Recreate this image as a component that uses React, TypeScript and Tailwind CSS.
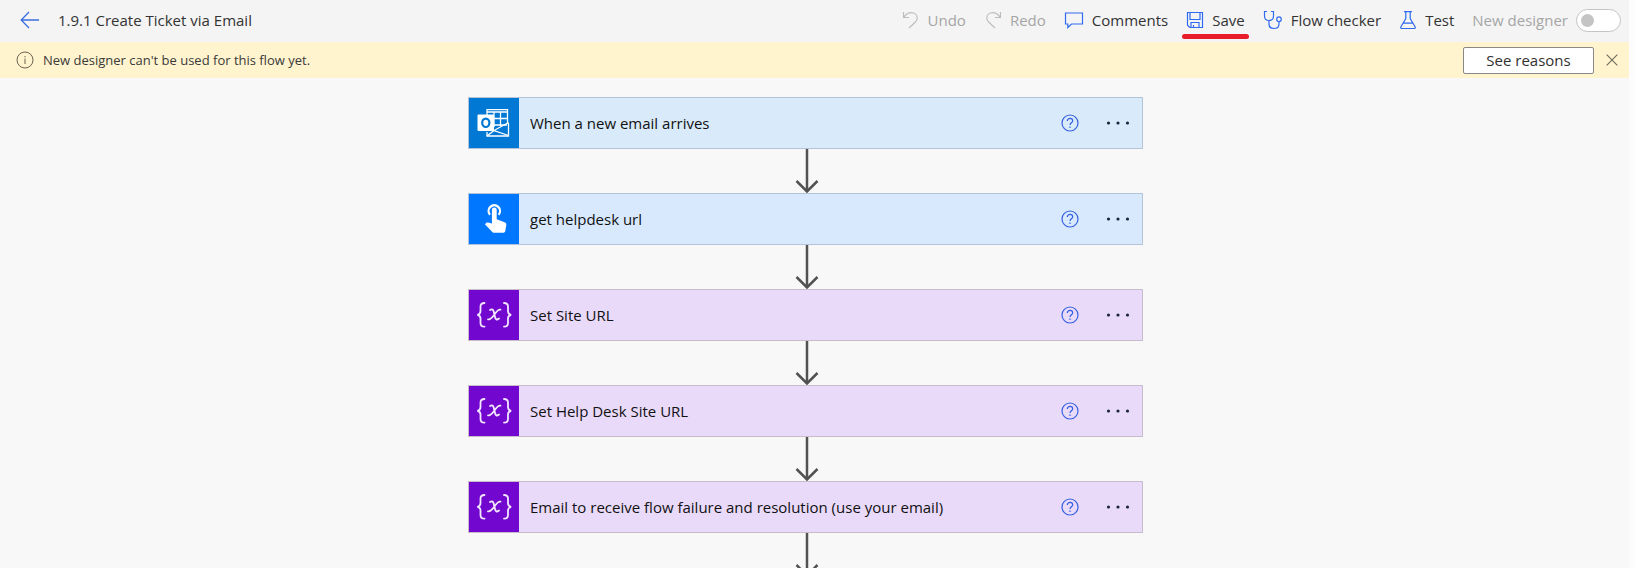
import type { ReactNode } from 'react'

interface Step {
  id: string
  title: string
  kind: 'outlook' | 'manual' | 'variable'
}

const steps: Step[] = [
  { id: 'trigger', title: 'When a new email arrives', kind: 'outlook' },
  { id: 'url', title: 'get helpdesk url', kind: 'manual' },
  { id: 'site', title: 'Set Site URL', kind: 'variable' },
  { id: 'desk', title: 'Set Help Desk Site URL', kind: 'variable' },
  { id: 'email', title: 'Email to receive flow failure and resolution (use your email)', kind: 'variable' },
]

const cardColors = {
  outlook: 'bg-[#d9eafa] border-[#b4c4d8]',
  manual: 'bg-[#d8e9fe] border-[#b4c4d8]',
  variable: 'bg-[#e9dafa] border-[#c6bccb]',
}

const tileColors = {
  outlook: 'bg-[#0078d4]',
  manual: 'bg-[#0077ff]',
  variable: 'bg-[#7208cf]',
}

function BackIcon() {
  return (
    <svg width="20" height="18" viewBox="0 0 20 18" fill="none" stroke="#3b6fe0" strokeWidth="1.3" aria-hidden="true">
      <path d="M19 9H1.5M9 1L1.2 9L9 17" />
    </svg>
  )
}

function UndoIcon() {
  return (
    <svg width="18" height="18" viewBox="0 0 18 18" fill="none" stroke="#bdbdbd" strokeWidth="1.2" aria-hidden="true">
      <path d="M1.500 1v5.500H7M1.800 6.300C3.800 3.400 6.300 1.700 9.300 1.700c3.400 0 5.900 2.300 5.900 5.300 0 1.700-.6 2.900-1.800 4L7 17" />
    </svg>
  )
}

function RedoIcon() {
  return (
    <svg width="18" height="18" viewBox="0 0 18 18" fill="none" stroke="#bdbdbd" strokeWidth="1.2" aria-hidden="true">
      <path d="M16.500 1v5.500H11M16.200 6.300C14.200 3.400 11.700 1.700 8.700 1.700c-3.400 0-5.900 2.300-5.900 5.300 0 1.700.6 2.900 1.800 4L11 17" />
    </svg>
  )
}

function CommentIcon() {
  return (
    <svg width="20" height="18" viewBox="0 0 20 18" fill="none" stroke="#2f6bf0" strokeWidth="1.2" aria-hidden="true">
      <path d="M1.500 2h17v11H7.500L3.800 16.500V13H1.500z" />
    </svg>
  )
}

function SaveIcon() {
  return (
    <svg width="18" height="18" viewBox="0 0 18 18" fill="none" stroke="#2f6bf0" strokeWidth="1.2" aria-hidden="true">
      <path d="M1.500 1.500h15v15H3.800l-2.300-2.300zM4 1.500v7h10v-7M5 16.500v-5h8v5M7.500 16.500v-2.500" />
    </svg>
  )
}

function CheckerIcon() {
  return (
    <svg width="20" height="20" viewBox="0 0 20 20" fill="none" stroke="#2f6bf0" strokeWidth="1.2" aria-hidden="true">
      <path d="M4 1.500H1.500V6c0 2.800 1.800 4.500 4.500 4.500s4.500-1.700 4.500-4.500V1.500H8M6 10.500v3.700c0 2.700 1.800 4.300 4.900 4.300s5.100-1.600 5.100-4.300V11.500" />
      <circle cx="16" cy="9.200" r="2.300" />
    </svg>
  )
}

function TestIcon() {
  return (
    <svg width="18" height="20" viewBox="0 0 18 20" fill="none" stroke="#2f6bf0" strokeWidth="1.2" aria-hidden="true">
      <path d="M5 1.700h8M6.800 1.700v6.800L1.800 17c-.4.8 0 1.500.8 1.500h12.800c.8 0 1.200-.7.8-1.500l-5-8.500V1.700M4.200 13.200h9.600" />
    </svg>
  )
}

function InfoIcon() {
  return (
    <svg width="18" height="18" viewBox="0 0 18 18" fill="none" stroke="#6b6550" aria-hidden="true">
      <circle cx="9" cy="9" r="8" />
      <path d="M9 7.500v5.500M9 5v1.300" />
    </svg>
  )
}

function CloseIcon() {
  return (
    <svg width="12" height="12" viewBox="0 0 12 12" fill="none" stroke="#6e6a5c" strokeWidth="1.1" aria-hidden="true">
      <path d="M.7.7l10.600 10.600M11.300.7L.7 11.300" />
    </svg>
  )
}

function HelpIcon() {
  return (
    <svg width="18" height="18" viewBox="0 0 18 18" fill="none" stroke="#3460e0" strokeWidth="1.2" aria-hidden="true">
      <circle cx="9" cy="9" r="8" />
      <path d="M6.300 7c0-1.600 1.100-2.700 2.700-2.700s2.700 1 2.700 2.500C11.700 8.600 9 8.900 9 11M9 12.600v1.300" />
    </svg>
  )
}

function MoreIcon() {
  return (
    <svg width="24" height="4" viewBox="0 0 24 4" fill="#1b2440" aria-hidden="true">
      <circle cx="2.500" cy="2" r="1.600" />
      <circle cx="12" cy="2" r="1.600" />
      <circle cx="21.500" cy="2" r="1.600" />
    </svg>
  )
}

function OutlookIcon() {
  return (
    <svg width="50" height="50" viewBox="0 0 50 50" fill="none" aria-hidden="true">
      <path d="M18 17V11.700h20.500V26M18 34v4h21.500V25M18 14h20.500M25 14v15M31.500 14v14M18 20.500h20.500M22 27h16" stroke="#fff" strokeWidth="1.300" />
      <path d="M39.500 24.500L25 32.500l14.500 5M25 32.500l-7 5.500" stroke="#fff" strokeWidth="1.300" />
      <rect x="8.500" y="16.500" width="16.500" height="16.500" rx="1" fill="#fff" />
      <ellipse cx="16.800" cy="24.800" rx="3.600" ry="4.200" stroke="#0078d4" strokeWidth="2.200" />
    </svg>
  )
}

function TouchIcon() {
  return (
    <svg width="50" height="50" viewBox="0 0 50 50" fill="none" aria-hidden="true">
      <path d="M21 20.700a5.700 5.700 0 1 1 8.600 0" stroke="#fff" strokeWidth="2.300" />
      <path d="M22.900 15.800a2.400 2.400 0 0 1 4.800 0v9.500l7.900 2.900c1.400.5 1.900 1.500 1.700 2.900l-1 6c-.2 1.100-.9 1.700-2 1.700H25.300c-.8 0-1.400-.3-2-.9l-7.400-7.600 1.300-1.300c.5-.5 1.200-.6 1.900-.4l3.800.9z" fill="#fff" />
    </svg>
  )
}

function VariableIcon() {
  return (
    <svg width="50" height="50" viewBox="0 0 50 50" fill="none" stroke="#f3e6ff" strokeWidth="1.800" strokeLinecap="round" aria-hidden="true">
      <path d="M15.500 13c-3 0-4 1.200-4 3.700v4.300c0 2.400-.9 3.500-3.200 3.800 2.300.3 3.200 1.400 3.200 3.800v4.300c0 2.500 1 3.700 4 3.700" />
      <path d="M35 13c3 0 4 1.200 4 3.700v4.300c0 2.400.9 3.500 3.200 3.800-2.300.3-3.200 1.400-3.200 3.800v4.300c0 2.500-1 3.700-4 3.700" />
      <path d="M21 20c2.200-1.400 3.200-.6 3.800 2l1.200 5c.6 2.600 1.800 3.300 4 1.500M31.500 19.700c-2-.6-3.300.8-5.700 4.300s-4.300 6-6.800 5.300" />
    </svg>
  )
}

function Connector() {
  return (
    <svg width="28" height="44" viewBox="0 0 28 44" fill="none" stroke="#525252" strokeWidth="2.500" aria-hidden="true">
      <path d="M15 0v43M4.500 32L15 42.500L25.500 32" />
    </svg>
  )
}

function ToolbarButton({ icon, label, disabled = false }: { icon: ReactNode; label: string; disabled?: boolean }) {
  return (
    <button type="button" disabled={disabled} className="flex items-center gap-2 text-[#333] disabled:text-[#a6a6a6]">
      {icon}
      {label}
    </button>
  )
}

function StepCard({ step }: { step: Step }) {
  return (
    <div className={`flex h-13 w-full items-center border ${cardColors[step.kind]}`}>
      <div className={`h-full w-[50px] shrink-0 ${tileColors[step.kind]}`}>
        {step.kind === 'outlook' && <OutlookIcon />}
        {step.kind === 'manual' && <TouchIcon />}
        {step.kind === 'variable' && <VariableIcon />}
      </div>
      <h2 className="grow truncate pl-[11px] text-[15px] text-[#111]">{step.title}</h2>
      <button type="button" aria-label="Help" className="mr-[27px]">
        <HelpIcon />
      </button>
      <button type="button" aria-label="More options" className="mr-3 py-2">
        <MoreIcon />
      </button>
    </div>
  )
}

export default function App() {
  return (
    <div className="h-screen overflow-hidden border-r-[5px] border-[#fcfcfc] bg-[#f8f8f8] font-['Open_Sans',sans-serif]">
      <header className="flex h-[42px] items-center bg-[#f4f4f4] pr-2 pb-[2px] pl-5 text-[15px] whitespace-nowrap">
        <button type="button" aria-label="Back">
          <BackIcon />
        </button>
        <h1 className="ml-[18px] text-[15px] text-[#333]">1.9.1 Create Ticket via Email</h1>
        <div className="ml-auto flex items-center gap-[18px]">
          <ToolbarButton icon={<UndoIcon />} label="Undo" disabled />
          <ToolbarButton icon={<RedoIcon />} label="Redo" disabled />
          <ToolbarButton icon={<CommentIcon />} label="Comments" />
          <div className="relative">
            <ToolbarButton icon={<SaveIcon />} label="Save" />
            <span className="absolute -inset-x-1 -bottom-2 h-[5px] rounded-full bg-[#e81c2a]" />
          </div>
          <ToolbarButton icon={<CheckerIcon />} label="Flow checker" />
          <ToolbarButton icon={<TestIcon />} label="Test" />
          <label className="flex items-center gap-2 text-[#a6a6a6]">
            New designer
            <input
              type="checkbox"
              role="switch"
              disabled
              className="h-[23px] w-[45px] appearance-none rounded-full border border-[#c4c4c4] bg-white before:mt-1 before:ml-1 before:block before:size-[13px] before:rounded-full before:bg-[#c4c4c4]"
            />
          </label>
        </div>
      </header>

      <div className="flex h-9 items-center bg-[#fff4ce] pr-[11px] pl-4">
        <InfoIcon />
        <p className="ml-[9px] pt-[2px] text-[13px] text-[#3b3a39]">New designer can't be used for this flow yet.</p>
        <button type="button" className="ml-auto h-[27px] w-[131px] rounded-xs border border-[#8a8886] bg-white text-[15px] font-medium text-[#323130]">
          See reasons
        </button>
        <button type="button" aria-label="Dismiss" className="ml-3">
          <CloseIcon />
        </button>
      </div>

      <main className="pt-[19px] pr-[18px]">
        <ol className="mx-auto max-w-[675px]">
          {steps.map((step) => (
            <li key={step.id} className="flex flex-col items-center">
              <StepCard step={step} />
              <Connector />
            </li>
          ))}
        </ol>
      </main>
    </div>
  )
}
